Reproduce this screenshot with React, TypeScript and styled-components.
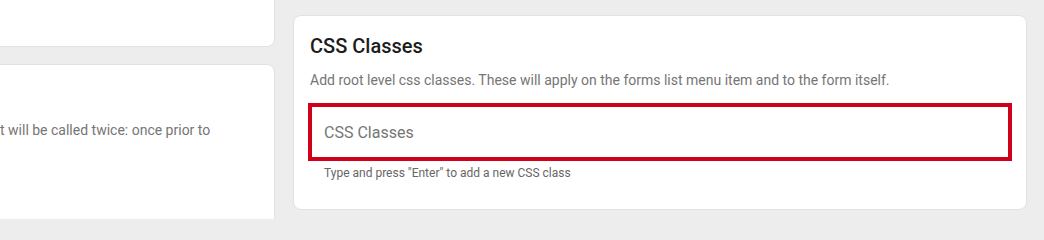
import * as React from 'react';
import styled, { createGlobalStyle } from 'styled-components';

const GlobalStyle = createGlobalStyle`
	html, body {
		margin: 0;
		padding: 0;
		background: #ededed;
		overflow: hidden;
	}
	body {
		font-family: Roboto, "Liberation Sans", Arial, sans-serif;
		-webkit-font-smoothing: antialiased;
	}
`;

const Page = styled.div`
	display: grid;
	grid-template-columns: 296px 734px;
	column-gap: 18px;
	align-items: start;
	margin-left: -21px;
	height: 219px;
	overflow: hidden;
`;

const Column = styled.div<{ $top?: number }>`
	display: flex;
	flex-direction: column;
	gap: 17px;
	padding-top: ${p => (p.$top ? `${p.$top}px` : 0)};
`;

const Card = styled.section<{ $height?: number; $pullUp?: number }>`
	box-sizing: border-box;
	background: #ffffff;
	border: 1px solid #e2e2e2;
	border-radius: 8px;
	padding: 20px;
	${p => (p.$height ? `min-height: ${p.$height}px;` : '')}
	${p => (p.$pullUp ? `margin-top: -${p.$pullUp}px;` : '')}
`;

const LeftText = styled.p`
	margin: 35px 0 0 0;
	font-size: 14px;
	line-height: 20px;
	color: #757575;
	white-space: nowrap;
`;

const Title = styled.h3`
	margin: 0;
	font-size: 20px;
	font-weight: 500;
	line-height: 24px;
	color: #1c1c1c;
`;

const Description = styled.p`
	margin: 12px 0 0 0;
	font-size: 14px;
	line-height: 20px;
	color: #757575;
`;

const ChipInput = styled.input`
	box-sizing: border-box;
	display: block;
	width: 100%;
	height: 58px;
	margin-top: 13px;
	padding: 0 12px;
	border: 4px solid #d0021b;
	border-radius: 0;
	outline: none;
	background: #ffffff;
	font-family: inherit;
	font-size: 16px;
	color: #212121;

	&::placeholder {
		color: #767676;
	}
`;

const Helper = styled.div`
	margin: 4px 0 0 16px;
	font-size: 12px;
	line-height: 16px;
	color: #666666;
`;

const FormCard = styled(Card)`
	padding: 15px 14px 28px 14px;
	min-height: 194px;
`;

const FormHeader = styled.div`
	padding-left: 2px;
	padding-top: 3px;
`;

export default function App() {
	return (
		<>
			<GlobalStyle />
			<Page>
				<Column>
					<Card $height={100} $pullUp={53} />
					<Card $height={200}>
						<LeftText>t will be called twice: once prior to</LeftText>
					</Card>
				</Column>
				<Column $top={15}>
					<FormCard>
						<FormHeader>
							<Title>CSS Classes</Title>
							<Description>
								Add root level css classes. These will apply on the forms list menu item and to the form itself.
							</Description>
						</FormHeader>
						<ChipInput placeholder="CSS Classes" />
						<Helper>Type and press "Enter" to add a new CSS class</Helper>
					</FormCard>
				</Column>
			</Page>
		</>
	);
}
